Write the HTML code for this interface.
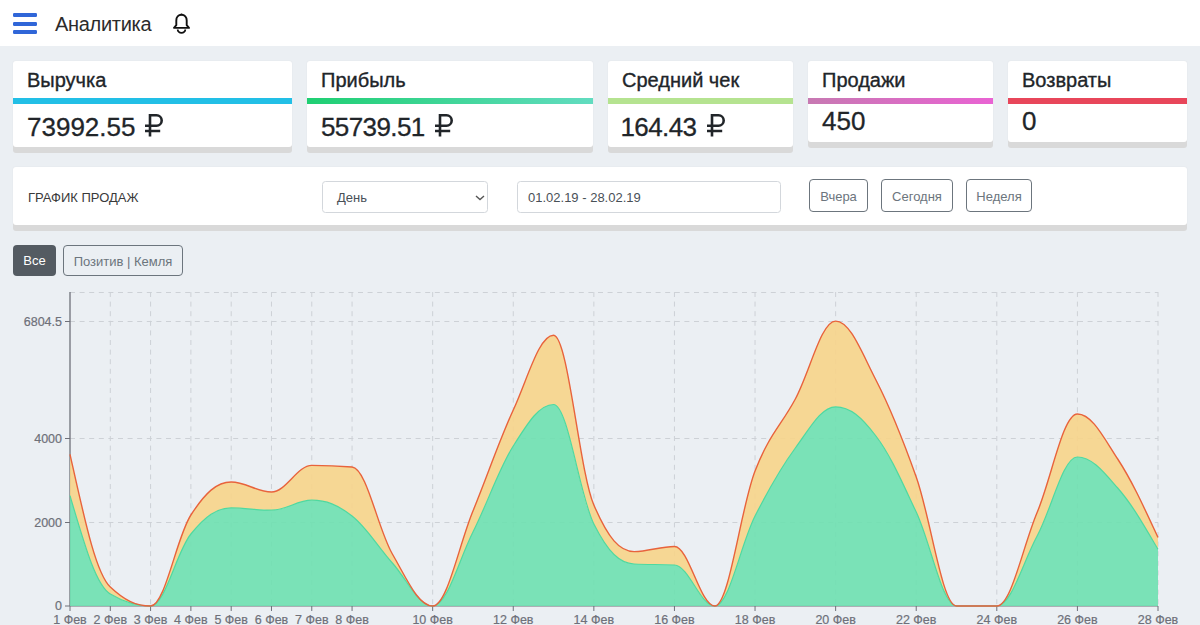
<!DOCTYPE html>
<html><head><meta charset="utf-8">
<style>
*{box-sizing:border-box}
html,body{margin:0;padding:0}
body{width:1200px;height:625px;overflow:hidden;background:#ebeff3;font-family:"Liberation Sans",sans-serif;color:#212529;position:relative}
.hdr{position:absolute;left:0;top:0;width:1200px;height:46px;background:#fff}
.burger span{position:absolute;left:13px;width:24px;height:3.8px;background:#3066d8;border-radius:1.2px}
.title{position:absolute;left:55px;top:13px;font-size:20px;letter-spacing:-0.3px;color:#2b2b2b;white-space:nowrap}
.bell{position:absolute;left:172px;top:13px;width:19px;height:21px}
.card{position:absolute;top:61px;background:#fff;border-radius:3px;box-shadow:0 6px 0 #d9d9d9,0 0 2px rgba(0,0,0,.06)}
.card .ct{position:absolute;left:14px;top:8px;font-size:20px;letter-spacing:0px;white-space:nowrap;color:#212529;-webkit-text-stroke:0.35px #212529}
.card .bar{position:absolute;left:0;right:0;top:37px;height:6px}
.card .cv{position:absolute;left:14px;top:51px;font-size:26px;white-space:nowrap;color:#212529;-webkit-text-stroke:0.3px #212529}
.rub{position:absolute;left:0;top:0}
.panel{position:absolute;left:13px;top:167px;width:1174px;height:58px;background:#fff;border-radius:3px;box-shadow:0 6px 0 #d9d9d9,0 0 2px rgba(0,0,0,.06)}
.plabel{position:absolute;left:15px;top:23px;font-size:13px;color:#3a3a3a;white-space:nowrap}
.sel{position:absolute;left:309px;top:14px;width:166px;height:32px;border:1px solid #d3d7dc;border-radius:3.5px;background:#fff}
.sel span{position:absolute;left:14px;top:8px;font-size:13px;color:#495057}
.sel svg{position:absolute;left:152px;top:12.5px}
.inp{position:absolute;left:504px;top:14px;width:264px;height:32px;border:1px solid #d3d7dc;border-radius:3.5px;background:#fff}
.inp span{position:absolute;left:10px;top:8px;font-size:13px;color:#495057;white-space:nowrap}
.btn{position:absolute;top:12px;height:33px;border:1px solid #6c757d;border-radius:4px;font-size:13px;color:#6c757d;text-align:center;line-height:33px;white-space:nowrap}
.b2{position:absolute;top:245px;height:31px;border-radius:4px;font-size:13px;line-height:31px;text-align:center;white-space:nowrap}
svg text{font-family:"Liberation Sans",sans-serif;font-size:12.5px;fill:#6e7079;stroke:#6e7079;stroke-width:0.2px}
</style></head><body>
<div class="hdr">
  <div class="burger"><span style="top:13.3px"></span><span style="top:21.8px"></span><span style="top:30.2px"></span></div>
  <div class="title">Аналитика</div>
  <svg class="bell" viewBox="0 0 19 21"><path d="M9.5 1.8c-3.2 0-5.2 2.4-5.2 5.6v4.8L2 14.9h15l-2.3-2.7V7.4c0-3.2-2-5.6-5.2-5.6z" fill="none" stroke="#111" stroke-width="1.9" stroke-linejoin="round"/><path d="M5.7 16.6a3.8 3.3 0 0 0 7.6 0" fill="none" stroke="#111" stroke-width="1.8"/><path d="M9.5 0.6v1.6" stroke="#111" stroke-width="1.6"/></svg>
</div>

<div class="card" style="left:13px;width:279px;height:86px">
  <div class="ct">Выручка</div>
  <div class="bar" style="background:#22bfe6"></div>
  <div class="cv">73992.55</div>
  <div style="position:absolute;left:131.5px;top:52.9px"><svg class="rub" width="20" height="24" viewBox="0 0 20 24"><path d="M5 22.6V1.3h6.5a5.2 5.2 0 0 1 0 10.4H0M0 17h15.2" fill="none" stroke="#212529" stroke-width="2.6"/></svg></div>
</div>
<div class="card" style="left:307px;width:286px;height:86px">
  <div class="ct">Прибыль</div>
  <div class="bar" style="background:linear-gradient(90deg,#1fcf72,#62dcc0)"></div>
  <div class="cv" style="letter-spacing:-0.6px">55739.51</div>
  <div style="position:absolute;left:127.6px;top:52.9px"><svg class="rub" width="20" height="24" viewBox="0 0 20 24"><path d="M5 22.6V1.3h6.5a5.2 5.2 0 0 1 0 10.4H0M0 17h15.2" fill="none" stroke="#212529" stroke-width="2.6"/></svg></div>
</div>
<div class="card" style="left:608px;width:185px;height:86px">
  <div class="ct">Средний чек</div>
  <div class="bar" style="background:#b5e390"></div>
  <div class="cv" style="letter-spacing:-0.6px;left:12.5px">164.43</div>
  <div style="position:absolute;left:98.9px;top:52.9px"><svg class="rub" width="20" height="24" viewBox="0 0 20 24"><path d="M5 22.6V1.3h6.5a5.2 5.2 0 0 1 0 10.4H0M0 17h15.2" fill="none" stroke="#212529" stroke-width="2.6"/></svg></div>
</div>
<div class="card" style="left:808px;width:185px;height:81px">
  <div class="ct">Продажи</div>
  <div class="bar" style="background:linear-gradient(90deg,#c779b2,#e963d3)"></div>
  <div class="cv" style="top:45px">450</div>
</div>
<div class="card" style="left:1008px;width:179px;height:81px">
  <div class="ct">Возвраты</div>
  <div class="bar" style="background:#e8465a"></div>
  <div class="cv" style="top:45px">0</div>
</div>

<div class="panel">
  <div class="plabel">ГРАФИК ПРОДАЖ</div>
  <div class="sel"><span>День</span><svg width="10" height="6" viewBox="0 0 10 6"><path d="M1 1l4 3.6 4-3.6" fill="none" stroke="#555" stroke-width="1.4"/></svg></div>
  <div class="inp"><span>01.02.19 - 28.02.19</span></div>
  <div class="btn" style="left:796px;width:59px">Вчера</div>
  <div class="btn" style="left:868px;width:72px">Сегодня</div>
  <div class="btn" style="left:953px;width:66px">Неделя</div>
</div>

<div class="b2" style="left:13px;width:43px;background:#545b62;color:#fff">Все</div>
<div class="b2" style="left:63px;width:120px;border:1px solid #6c757d;color:#6c757d">Позитив | Кемля</div>

<svg style="position:absolute;left:0;top:0" width="1200" height="625">
<defs><clipPath id="gc"><rect x="69" y="285" width="1095" height="322.2"/></clipPath></defs>
<g stroke="#cdd1d6" stroke-width="1" stroke-dasharray="5,4.6" fill="none">
<line x1="70" y1="292.5" x2="1158" y2="292.5"/>
<line x1="70" y1="321.5" x2="1158" y2="321.5"/>
<line x1="70" y1="438.5" x2="1158" y2="438.5"/>
<line x1="70" y1="522.5" x2="1158" y2="522.5"/>
<line x1="110.30" y1="292" x2="110.30" y2="606"/>
<line x1="150.59" y1="292" x2="150.59" y2="606"/>
<line x1="190.89" y1="292" x2="190.89" y2="606"/>
<line x1="231.19" y1="292" x2="231.19" y2="606"/>
<line x1="271.48" y1="292" x2="271.48" y2="606"/>
<line x1="311.78" y1="292" x2="311.78" y2="606"/>
<line x1="352.07" y1="292" x2="352.07" y2="606"/>
<line x1="432.67" y1="292" x2="432.67" y2="606"/>
<line x1="513.26" y1="292" x2="513.26" y2="606"/>
<line x1="593.85" y1="292" x2="593.85" y2="606"/>
<line x1="674.44" y1="292" x2="674.44" y2="606"/>
<line x1="755.04" y1="292" x2="755.04" y2="606"/>
<line x1="835.63" y1="292" x2="835.63" y2="606"/>
<line x1="916.22" y1="292" x2="916.22" y2="606"/>
<line x1="996.81" y1="292" x2="996.81" y2="606"/>
<line x1="1077.41" y1="292" x2="1077.41" y2="606"/>
<line x1="1158.00" y1="292" x2="1158.00" y2="606"/>
</g>
<g stroke="#6e7079" stroke-width="1">
<line x1="70" y1="292" x2="70" y2="606" stroke-width="1.3"/>
<line x1="70" y1="606" x2="1158" y2="606"/>
<line x1="70.00" y1="606" x2="70.00" y2="611"/>
<line x1="110.30" y1="606" x2="110.30" y2="611"/>
<line x1="150.59" y1="606" x2="150.59" y2="611"/>
<line x1="190.89" y1="606" x2="190.89" y2="611"/>
<line x1="231.19" y1="606" x2="231.19" y2="611"/>
<line x1="271.48" y1="606" x2="271.48" y2="611"/>
<line x1="311.78" y1="606" x2="311.78" y2="611"/>
<line x1="352.07" y1="606" x2="352.07" y2="611"/>
<line x1="432.67" y1="606" x2="432.67" y2="611"/>
<line x1="513.26" y1="606" x2="513.26" y2="611"/>
<line x1="593.85" y1="606" x2="593.85" y2="611"/>
<line x1="674.44" y1="606" x2="674.44" y2="611"/>
<line x1="755.04" y1="606" x2="755.04" y2="611"/>
<line x1="835.63" y1="606" x2="835.63" y2="611"/>
<line x1="916.22" y1="606" x2="916.22" y2="611"/>
<line x1="996.81" y1="606" x2="996.81" y2="611"/>
<line x1="1077.41" y1="606" x2="1077.41" y2="611"/>
<line x1="1158.00" y1="606" x2="1158.00" y2="611"/>
<line x1="65" y1="321.5" x2="70" y2="321.5"/>
<line x1="65" y1="438.5" x2="70" y2="438.5"/>
<line x1="65" y1="522.5" x2="70" y2="522.5"/>
<line x1="65" y1="606" x2="70" y2="606"/>
</g>
<g clip-path="url(#gc)">
<path d="M70.00,495.70 C84.51,544.46 95.79,585.36 110.30,594.00 C124.80,602.64 136.09,606.00 150.59,606.00 C165.10,606.00 176.38,551.66 190.89,534.00 C205.40,516.34 216.68,507.90 231.19,507.90 C245.69,507.90 256.97,510.20 271.48,510.20 C285.99,510.20 297.27,500.20 311.78,500.20 C326.28,500.20 337.57,504.70 352.07,516.00 C366.58,527.30 377.86,546.80 392.37,563.00 C406.88,579.20 418.16,606.00 432.67,606.00 C447.17,606.00 458.46,560.80 472.96,532.00 C487.47,503.20 498.75,468.95 513.26,446.00 C527.77,423.05 539.05,404.50 553.56,404.50 C568.06,404.50 579.35,495.29 593.85,524.00 C608.36,552.71 619.64,563.28 634.15,564.00 C648.65,564.72 659.94,564.28 674.44,565.00 C688.95,565.72 700.23,606.00 714.74,606.00 C729.25,606.00 740.53,544.44 755.04,516.00 C769.54,487.56 780.83,467.66 795.33,448.00 C809.84,428.34 821.12,406.80 835.63,406.80 C850.14,406.80 861.42,417.06 875.93,436.00 C890.43,454.94 901.72,481.40 916.22,512.00 C930.73,542.60 942.01,606.00 956.52,606.00 C971.03,606.00 982.31,606.00 996.81,606.00 C1011.32,606.00 1022.60,562.82 1037.11,536.00 C1051.62,509.18 1062.90,457.00 1077.41,457.00 C1091.91,457.00 1103.20,471.39 1117.70,488.00 C1132.21,504.61 1143.49,524.50 1158.00,549.30 L1158.00,606.0 L70.00,606.0 Z" fill="#6ee0b0" fill-opacity="0.9"/>
<path d="M70.00,454.30 C84.51,519.12 95.79,573.32 110.30,587.00 C124.80,600.68 136.09,606.00 150.59,606.00 C165.10,606.00 176.38,537.32 190.89,515.00 C205.40,492.68 216.68,482.00 231.19,482.00 C245.69,482.00 256.97,492.00 271.48,492.00 C285.99,492.00 297.27,465.40 311.78,465.40 C326.28,465.40 337.57,465.85 352.07,467.00 C366.58,468.15 377.86,528.98 392.37,554.00 C406.88,579.02 418.16,606.00 432.67,606.00 C447.17,606.00 458.46,546.28 472.96,511.00 C487.47,475.72 498.75,441.64 513.26,410.00 C527.77,378.36 539.05,335.20 553.56,335.20 C568.06,335.20 579.35,471.45 593.85,505.00 C608.36,538.55 619.64,551.60 634.15,551.60 C648.65,551.60 659.94,546.50 674.44,546.50 C688.95,546.50 700.23,606.00 714.74,606.00 C729.25,606.00 740.53,508.26 755.04,471.00 C769.54,433.74 780.83,425.98 795.33,399.00 C809.84,372.02 821.12,321.10 835.63,321.10 C850.14,321.10 861.42,351.94 875.93,380.00 C890.43,408.06 901.72,436.32 916.22,477.00 C930.73,517.68 942.01,606.00 956.52,606.00 C971.03,606.00 982.31,606.00 996.81,606.00 C1011.32,606.00 1022.60,547.06 1037.11,512.50 C1051.62,477.94 1062.90,414.00 1077.41,414.00 C1091.91,414.00 1103.20,436.77 1117.70,459.00 C1132.21,481.23 1143.49,506.23 1158.00,537.50 L1158.00,549.30 C1143.49,524.50 1132.21,504.61 1117.70,488.00 C1103.20,471.39 1091.91,457.00 1077.41,457.00 C1062.90,457.00 1051.62,509.18 1037.11,536.00 C1022.60,562.82 1011.32,606.00 996.81,606.00 C982.31,606.00 971.03,606.00 956.52,606.00 C942.01,606.00 930.73,542.60 916.22,512.00 C901.72,481.40 890.43,454.94 875.93,436.00 C861.42,417.06 850.14,406.80 835.63,406.80 C821.12,406.80 809.84,428.34 795.33,448.00 C780.83,467.66 769.54,487.56 755.04,516.00 C740.53,544.44 729.25,606.00 714.74,606.00 C700.23,606.00 688.95,565.72 674.44,565.00 C659.94,564.28 648.65,564.72 634.15,564.00 C619.64,563.28 608.36,552.71 593.85,524.00 C579.35,495.29 568.06,404.50 553.56,404.50 C539.05,404.50 527.77,423.05 513.26,446.00 C498.75,468.95 487.47,503.20 472.96,532.00 C458.46,560.80 447.17,606.00 432.67,606.00 C418.16,606.00 406.88,579.20 392.37,563.00 C377.86,546.80 366.58,527.30 352.07,516.00 C337.57,504.70 326.28,500.20 311.78,500.20 C297.27,500.20 285.99,510.20 271.48,510.20 C256.97,510.20 245.69,507.90 231.19,507.90 C216.68,507.90 205.40,516.34 190.89,534.00 C176.38,551.66 165.10,606.00 150.59,606.00 C136.09,606.00 124.80,602.64 110.30,594.00 C95.79,585.36 84.51,544.46 70.00,495.70 Z" fill="#f7d48a" fill-opacity="0.9"/>
<path d="M70.00,495.70 C84.51,544.46 95.79,585.36 110.30,594.00 C124.80,602.64 136.09,606.00 150.59,606.00 C165.10,606.00 176.38,551.66 190.89,534.00 C205.40,516.34 216.68,507.90 231.19,507.90 C245.69,507.90 256.97,510.20 271.48,510.20 C285.99,510.20 297.27,500.20 311.78,500.20 C326.28,500.20 337.57,504.70 352.07,516.00 C366.58,527.30 377.86,546.80 392.37,563.00 C406.88,579.20 418.16,606.00 432.67,606.00 C447.17,606.00 458.46,560.80 472.96,532.00 C487.47,503.20 498.75,468.95 513.26,446.00 C527.77,423.05 539.05,404.50 553.56,404.50 C568.06,404.50 579.35,495.29 593.85,524.00 C608.36,552.71 619.64,563.28 634.15,564.00 C648.65,564.72 659.94,564.28 674.44,565.00 C688.95,565.72 700.23,606.00 714.74,606.00 C729.25,606.00 740.53,544.44 755.04,516.00 C769.54,487.56 780.83,467.66 795.33,448.00 C809.84,428.34 821.12,406.80 835.63,406.80 C850.14,406.80 861.42,417.06 875.93,436.00 C890.43,454.94 901.72,481.40 916.22,512.00 C930.73,542.60 942.01,606.00 956.52,606.00 C971.03,606.00 982.31,606.00 996.81,606.00 C1011.32,606.00 1022.60,562.82 1037.11,536.00 C1051.62,509.18 1062.90,457.00 1077.41,457.00 C1091.91,457.00 1103.20,471.39 1117.70,488.00 C1132.21,504.61 1143.49,524.50 1158.00,549.30" fill="none" stroke="#4ed9a0" stroke-width="1.2"/>
<path d="M70.00,454.30 C84.51,519.12 95.79,573.32 110.30,587.00 C124.80,600.68 136.09,606.00 150.59,606.00 C165.10,606.00 176.38,537.32 190.89,515.00 C205.40,492.68 216.68,482.00 231.19,482.00 C245.69,482.00 256.97,492.00 271.48,492.00 C285.99,492.00 297.27,465.40 311.78,465.40 C326.28,465.40 337.57,465.85 352.07,467.00 C366.58,468.15 377.86,528.98 392.37,554.00 C406.88,579.02 418.16,606.00 432.67,606.00 C447.17,606.00 458.46,546.28 472.96,511.00 C487.47,475.72 498.75,441.64 513.26,410.00 C527.77,378.36 539.05,335.20 553.56,335.20 C568.06,335.20 579.35,471.45 593.85,505.00 C608.36,538.55 619.64,551.60 634.15,551.60 C648.65,551.60 659.94,546.50 674.44,546.50 C688.95,546.50 700.23,606.00 714.74,606.00 C729.25,606.00 740.53,508.26 755.04,471.00 C769.54,433.74 780.83,425.98 795.33,399.00 C809.84,372.02 821.12,321.10 835.63,321.10 C850.14,321.10 861.42,351.94 875.93,380.00 C890.43,408.06 901.72,436.32 916.22,477.00 C930.73,517.68 942.01,606.00 956.52,606.00 C971.03,606.00 982.31,606.00 996.81,606.00 C1011.32,606.00 1022.60,547.06 1037.11,512.50 C1051.62,477.94 1062.90,414.00 1077.41,414.00 C1091.91,414.00 1103.20,436.77 1117.70,459.00 C1132.21,481.23 1143.49,506.23 1158.00,537.50" fill="none" stroke="#e8633c" stroke-width="1.4"/>
</g>

<text x="70.00" y="624" text-anchor="middle">1 Фев</text>
<text x="110.30" y="624" text-anchor="middle">2 Фев</text>
<text x="150.59" y="624" text-anchor="middle">3 Фев</text>
<text x="190.89" y="624" text-anchor="middle">4 Фев</text>
<text x="231.19" y="624" text-anchor="middle">5 Фев</text>
<text x="271.48" y="624" text-anchor="middle">6 Фев</text>
<text x="311.78" y="624" text-anchor="middle">7 Фев</text>
<text x="352.07" y="624" text-anchor="middle">8 Фев</text>
<text x="432.67" y="624" text-anchor="middle">10 Фев</text>
<text x="513.26" y="624" text-anchor="middle">12 Фев</text>
<text x="593.85" y="624" text-anchor="middle">14 Фев</text>
<text x="674.44" y="624" text-anchor="middle">16 Фев</text>
<text x="755.04" y="624" text-anchor="middle">18 Фев</text>
<text x="835.63" y="624" text-anchor="middle">20 Фев</text>
<text x="916.22" y="624" text-anchor="middle">22 Фев</text>
<text x="996.81" y="624" text-anchor="middle">24 Фев</text>
<text x="1077.41" y="624" text-anchor="middle">26 Фев</text>
<text x="1158.00" y="624" text-anchor="middle">28 Фев</text>
<text x="62" y="325.8" text-anchor="end">6804.5</text>
<text x="62" y="442.8" text-anchor="end">4000</text>
<text x="62" y="526.8" text-anchor="end">2000</text>
<text x="62" y="610.3" text-anchor="end">0</text>
</svg>
</body></html>
